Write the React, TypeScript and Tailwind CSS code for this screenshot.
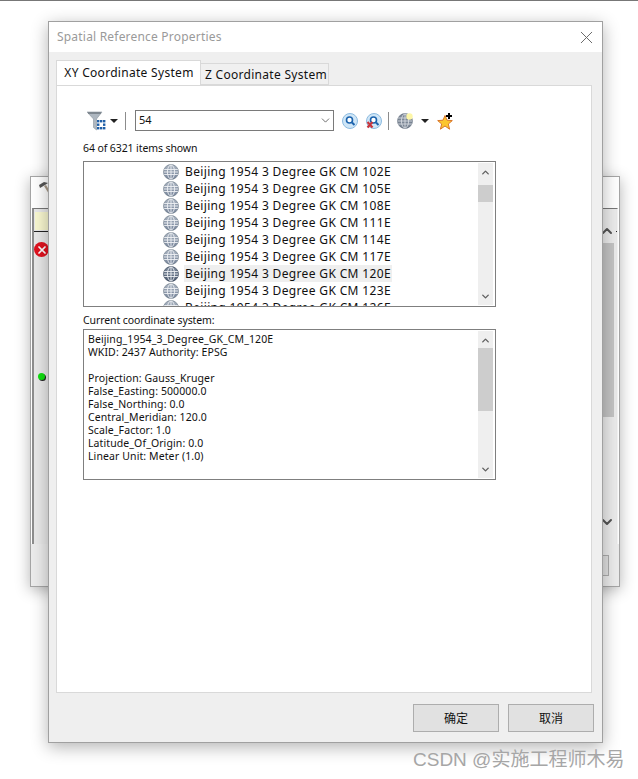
import React from 'react';
import { ChevronDown, ChevronUp, X } from 'lucide-react';

const ui = { fontFamily: 'Tahoma, "Noto Sans", sans-serif' };

const rows = ['102E', '105E', '108E', '111E', '114E', '117E', '120E', '123E', '126E'];

const details = [
  'Beijing_1954_3_Degree_GK_CM_120E',
  'WKID: 2437 Authority: EPSG',
  '',
  'Projection: Gauss_Kruger',
  'False_Easting: 500000.0',
  'False_Northing: 0.0',
  'Central_Meridian: 120.0',
  'Scale_Factor: 1.0',
  'Latitude_Of_Origin: 0.0',
  'Linear Unit: Meter (1.0)',
];

function Globe({ dark = false }: { dark?: boolean }) {
  const id = dark ? 'globe-dark' : 'globe-light';
  return (
    <svg width="16" height="16" viewBox="0 0 16 16" className="shrink-0">
      <defs>
        <linearGradient id={id} x1="0" y1="0" x2="0" y2="1">
          <stop offset="0" stopColor={dark ? '#7d8a9c' : '#a9b3c0'} />
          <stop offset="1" stopColor={dark ? '#4d5b70' : '#76849a'} />
        </linearGradient>
      </defs>
      <circle cx="8" cy="8" r="7.5" fill={`url(#${id})`} stroke={dark ? '#3f4c5f' : '#76828f'} strokeWidth="0.7" />
      <g fill="none" stroke="#eef1f4" strokeWidth="0.9">
        <ellipse cx="8" cy="8" rx="3.6" ry="7" />
        <path d="M8 1v14M1.2 5.5h13.6M1.2 10.5h13.6M.8 8h14.4" />
      </g>
    </svg>
  );
}

function Scrollbar({ thumbTop, thumbHeight }: { thumbTop: string; thumbHeight: string }) {
  return (
    <div className="absolute right-[2px] top-[1px] bottom-[1px] w-[15px] bg-[#efefef]">
      <ChevronUp size={11} strokeWidth={3} className="absolute left-[2px] top-[4px] text-[#606060]" />
      <div className={`absolute left-0 w-[15px] bg-[#cdcdcd] ${thumbTop} ${thumbHeight}`} />
      <ChevronDown size={11} strokeWidth={3} className="absolute left-[2px] bottom-[3px] text-[#606060]" />
    </div>
  );
}

function Caret() {
  return <div className="h-0 w-0 border-x-[4px] border-t-[4px] border-x-transparent border-t-[#222]" />;
}

function Funnel() {
  return (
    <svg width="19" height="20" viewBox="0 0 19 20">
      <path d="M0 1h15L9.5 8v11l-3-2.5V8z" fill="#aeb7c0" stroke="#8c959e" strokeWidth="0.6" />
      <path d="M1 1h13v2H1z" fill="#7f8890" />
      <g fill="#1f5fa8">
        <rect x="10" y="9" width="2.4" height="2.4" /><rect x="13" y="9" width="2.4" height="2.4" /><rect x="16" y="9" width="2.4" height="2.4" />
        <rect x="10" y="12.5" width="2.4" height="2.4" /><rect x="16" y="12.5" width="2.4" height="2.4" />
        <rect x="10" y="16" width="2.4" height="2.4" /><rect x="13" y="16" width="2.4" height="2.4" /><rect x="16" y="16" width="2.4" height="2.4" />
      </g>
    </svg>
  );
}

function SearchIcon({ clear = false }: { clear?: boolean }) {
  return (
    <svg width="16" height="16" viewBox="0 0 16 16">
      <circle cx="8" cy="8" r="7.5" fill="#cfe6f7" stroke="#8dbbe0" />
      <circle cx="7.5" cy="7" r="3" fill="#fff" stroke="#1c63ad" strokeWidth="1.6" />
      <path d="M10 9.5l2.5 2.5" stroke="#1c63ad" strokeWidth="2" />
      {clear && <path d="M1.5 9l5 5.5M6.5 9l-5 5.5" stroke="#c8353c" strokeWidth="2.2" />}
    </svg>
  );
}

function SmallGlobe() {
  return (
    <svg width="17" height="17" viewBox="0 0 17 17">
      <circle cx="8" cy="9" r="7.5" fill="#7c8796" stroke="#5d6877" strokeWidth="0.6" />
      <g fill="none" stroke="#dfe3e8" strokeWidth="0.8">
        <ellipse cx="8" cy="9" rx="3.6" ry="7" />
        <path d="M8 2v14M1 6h14M1 12h14M.6 9h14.8" />
      </g>
      <circle cx="12.5" cy="4.5" r="3.2" fill="#fdf6a8" />
    </svg>
  );
}

function StarIcon() {
  return (
    <svg width="18" height="18" viewBox="0 0 18 18">
      <path d="M8 3.5l2 4.7 5.3.4-4 3.4 1.3 5.2L8 14l-4.6 3.2 1.3-5.2-4-3.4 5.3-.4z" fill="#fcc62e" stroke="#d9762b" strokeWidth="1" />
      <path d="M12 1v6M9 4h6" stroke="#000" strokeWidth="2" />
    </svg>
  );
}

function Separator() {
  return <div className="h-[18px] w-px bg-[#8c8c8c]" />;
}

function BackWindow() {
  return (
    <div className="absolute left-[30px] top-[176px] flex h-[411px] w-[590px] flex-col border border-[#a5a5a5] bg-white shadow-[0_3px_14px_rgba(0,0,0,0.3)]">
      <div className="h-[31px] shrink-0 pl-[7px] pt-[3px]">
        <svg width="14" height="14" viewBox="0 0 14 14">
          <path d="M1 5l5-3 4 1-3 2-5 3z" fill="#555" />
          <path d="M6 6l2-1 5 8-2 1z" fill="#a89a88" />
        </svg>
      </div>
      <div className="relative mx-[1px] h-[336px] shrink-0 border-l-2 border-t border-r border-l-[#8e8e8e] border-t-[#777] border-r-[#f4f4f4] bg-[#e9e9e9]">
        <div className="ml-[1px] mt-[3px] h-[18px] w-[20px] bg-[#f9f8d0]" />
        <div className="mt-[1px] h-px w-full bg-[#222]" />
        <div className="absolute left-0 top-[33px] flex h-[15px] w-[15px] items-center justify-center rounded-full bg-[#e0121f]">
          <X size={12} strokeWidth={3.5} className="text-white" />
        </div>
        <div className="absolute left-[4px] top-[164px] h-[7px] w-[7px] rounded-full bg-[#0fe00f] shadow-[1px_1px_0_#222]" />
        <div className="absolute right-[1px] top-0 bottom-0 w-[17px] bg-[#ececec]">
          <ChevronUp size={16} strokeWidth={3} className="absolute left-0 top-[14px] text-[#555]" />
          <div className="absolute left-0 right-[2px] top-[34px] h-[174px] bg-[#c4c4c4]" />
          <ChevronDown size={16} strokeWidth={3} className="absolute left-0 bottom-[14px] text-[#555]" />
        </div>
      </div>
      <div className="flex flex-1 items-center justify-end bg-[#ececec] pr-[10px]">
        <div className="h-[21px] w-[80px] border border-[#adadad] bg-[#e1e1e1]" />
      </div>
    </div>
  );
}

function Dialog() {
  return (
    <div className="absolute left-[48px] top-[21px] flex h-[722px] w-[555px] flex-col border border-[#a0a0a0] bg-[#efefef] shadow-[0_4px_16px_rgba(0,0,0,0.3)]">
      <div className="flex h-[30px] shrink-0 items-center justify-between bg-white pl-[8px] pr-[5px]">
        <span className="text-[12px] tracking-[0.2px] text-[#9a9a9a]">Spatial Reference Properties</span>
        <X size={21} strokeWidth={1.1} className="text-[#666]" />
      </div>
      <div className="flex flex-1 flex-col pl-[7px] pr-[10px] pt-[9px]">
        <div className="relative z-10 flex h-[24px] items-end">
          <div className="flex h-[25px] w-[145px] items-center justify-center border border-b-0 border-[#d9d9d9] bg-white pl-[1px] text-[12px] tracking-[0.3px] text-[#111]">XY Coordinate System</div>
          <div className="flex h-[22px] w-[128px] items-center justify-center border border-l-0 border-[#d9d9d9] bg-[#f0f0f0] pl-[3px] pt-[2px] text-[12px] tracking-[0.3px] text-[#111]">Z Coordinate System</div>
        </div>
        <div className="h-[608px] border border-[#d9d9d9] bg-white pl-[26px]">
          <div className="mt-[24px] flex h-[21px] items-center">
            <div className="ml-[4px] w-[19px]"><Funnel /></div>
            <div className="ml-[4px]"><Caret /></div>
            <div className="ml-[7px]"><Separator /></div>
            <div className="ml-[9px] flex h-[21px] w-[199px] items-center justify-between border border-[#7a7a7a] pl-[3px] pr-[1px] text-[11px] text-[#111]">
              54
              <ChevronDown size={13} strokeWidth={1.4} className="text-[#444]" />
            </div>
            <div className="ml-[8px]"><SearchIcon /></div>
            <div className="ml-[8px]"><SearchIcon clear /></div>
            <div className="ml-[6px]"><Separator /></div>
            <div className="ml-[8px]"><SmallGlobe /></div>
            <div className="ml-[7px]"><Caret /></div>
            <div className="ml-[8px]"><StarIcon /></div>
          </div>
          <div className="mt-[11px] h-[13px] text-[10.5px] leading-[13px] tracking-[-0.1px] text-[#111]">64 of 6321 items shown</div>
          <div className="relative mt-[6px] h-[146px] w-[413px] overflow-hidden border border-[#7f7f7f] bg-white">
            <div className="ml-[79px] mt-px">
              {rows.map((code, i) => (
                <div key={code} className="flex h-[17px] items-center gap-[5px]">
                  <Globe dark={i === 6} />
                  <span className={`h-[17px] px-px text-[12px] leading-[17px] tracking-[0.35px] text-[#111] ${i === 6 ? 'bg-[#efefef]' : ''}`}>
                    Beijing 1954 3 Degree GK CM {code}
                  </span>
                </div>
              ))}
            </div>
            <Scrollbar thumbTop="top-[22px]" thumbHeight="h-[17px]" />
          </div>
          <div className="mt-[7px] h-[13px] text-[10.5px] leading-[13px] tracking-[-0.1px] text-[#111]">Current coordinate system:</div>
          <div className="relative mt-[2px] h-[151px] w-[413px] border border-[#7f7f7f] bg-white pl-[4px] pt-[3px]">
            {details.map((line, i) => (
              <div key={i} className="h-[13px] text-[10.5px] leading-[13px] tracking-[0.1px] text-[#111]">{line}</div>
            ))}
            <Scrollbar thumbTop="top-[17px]" thumbHeight="h-[63px]" />
          </div>
        </div>
        <div className="flex flex-1 items-start justify-end gap-[9px] pt-[11px]">
          <button className="flex h-[28px] w-[86px] items-center justify-center border border-[#adadad] bg-[#e1e1e1] text-[12px] text-[#111]" style={{ fontFamily: '"Noto Sans CJK SC", sans-serif' }}>确定</button>
          <button className="mr-[-2px] flex h-[28px] w-[86px] items-center justify-center border border-[#adadad] bg-[#e1e1e1] text-[12px] text-[#111]" style={{ fontFamily: '"Noto Sans CJK SC", sans-serif' }}>取消</button>
        </div>
      </div>
    </div>
  );
}

export default function App() {
  return (
    <div className="relative h-[779px] w-[638px] overflow-hidden bg-white" style={ui}>
      <div className="h-px w-full bg-[#777]" />
      <BackWindow />
      <Dialog />
      <div className="absolute left-[413px] top-[749px] whitespace-nowrap text-[19px] leading-[22px] text-[#a6a6a6]" style={{ fontFamily: '"Liberation Sans", "Noto Sans CJK SC", sans-serif' }}>
        CSDN @实施工程师木易
      </div>
    </div>
  );
}
